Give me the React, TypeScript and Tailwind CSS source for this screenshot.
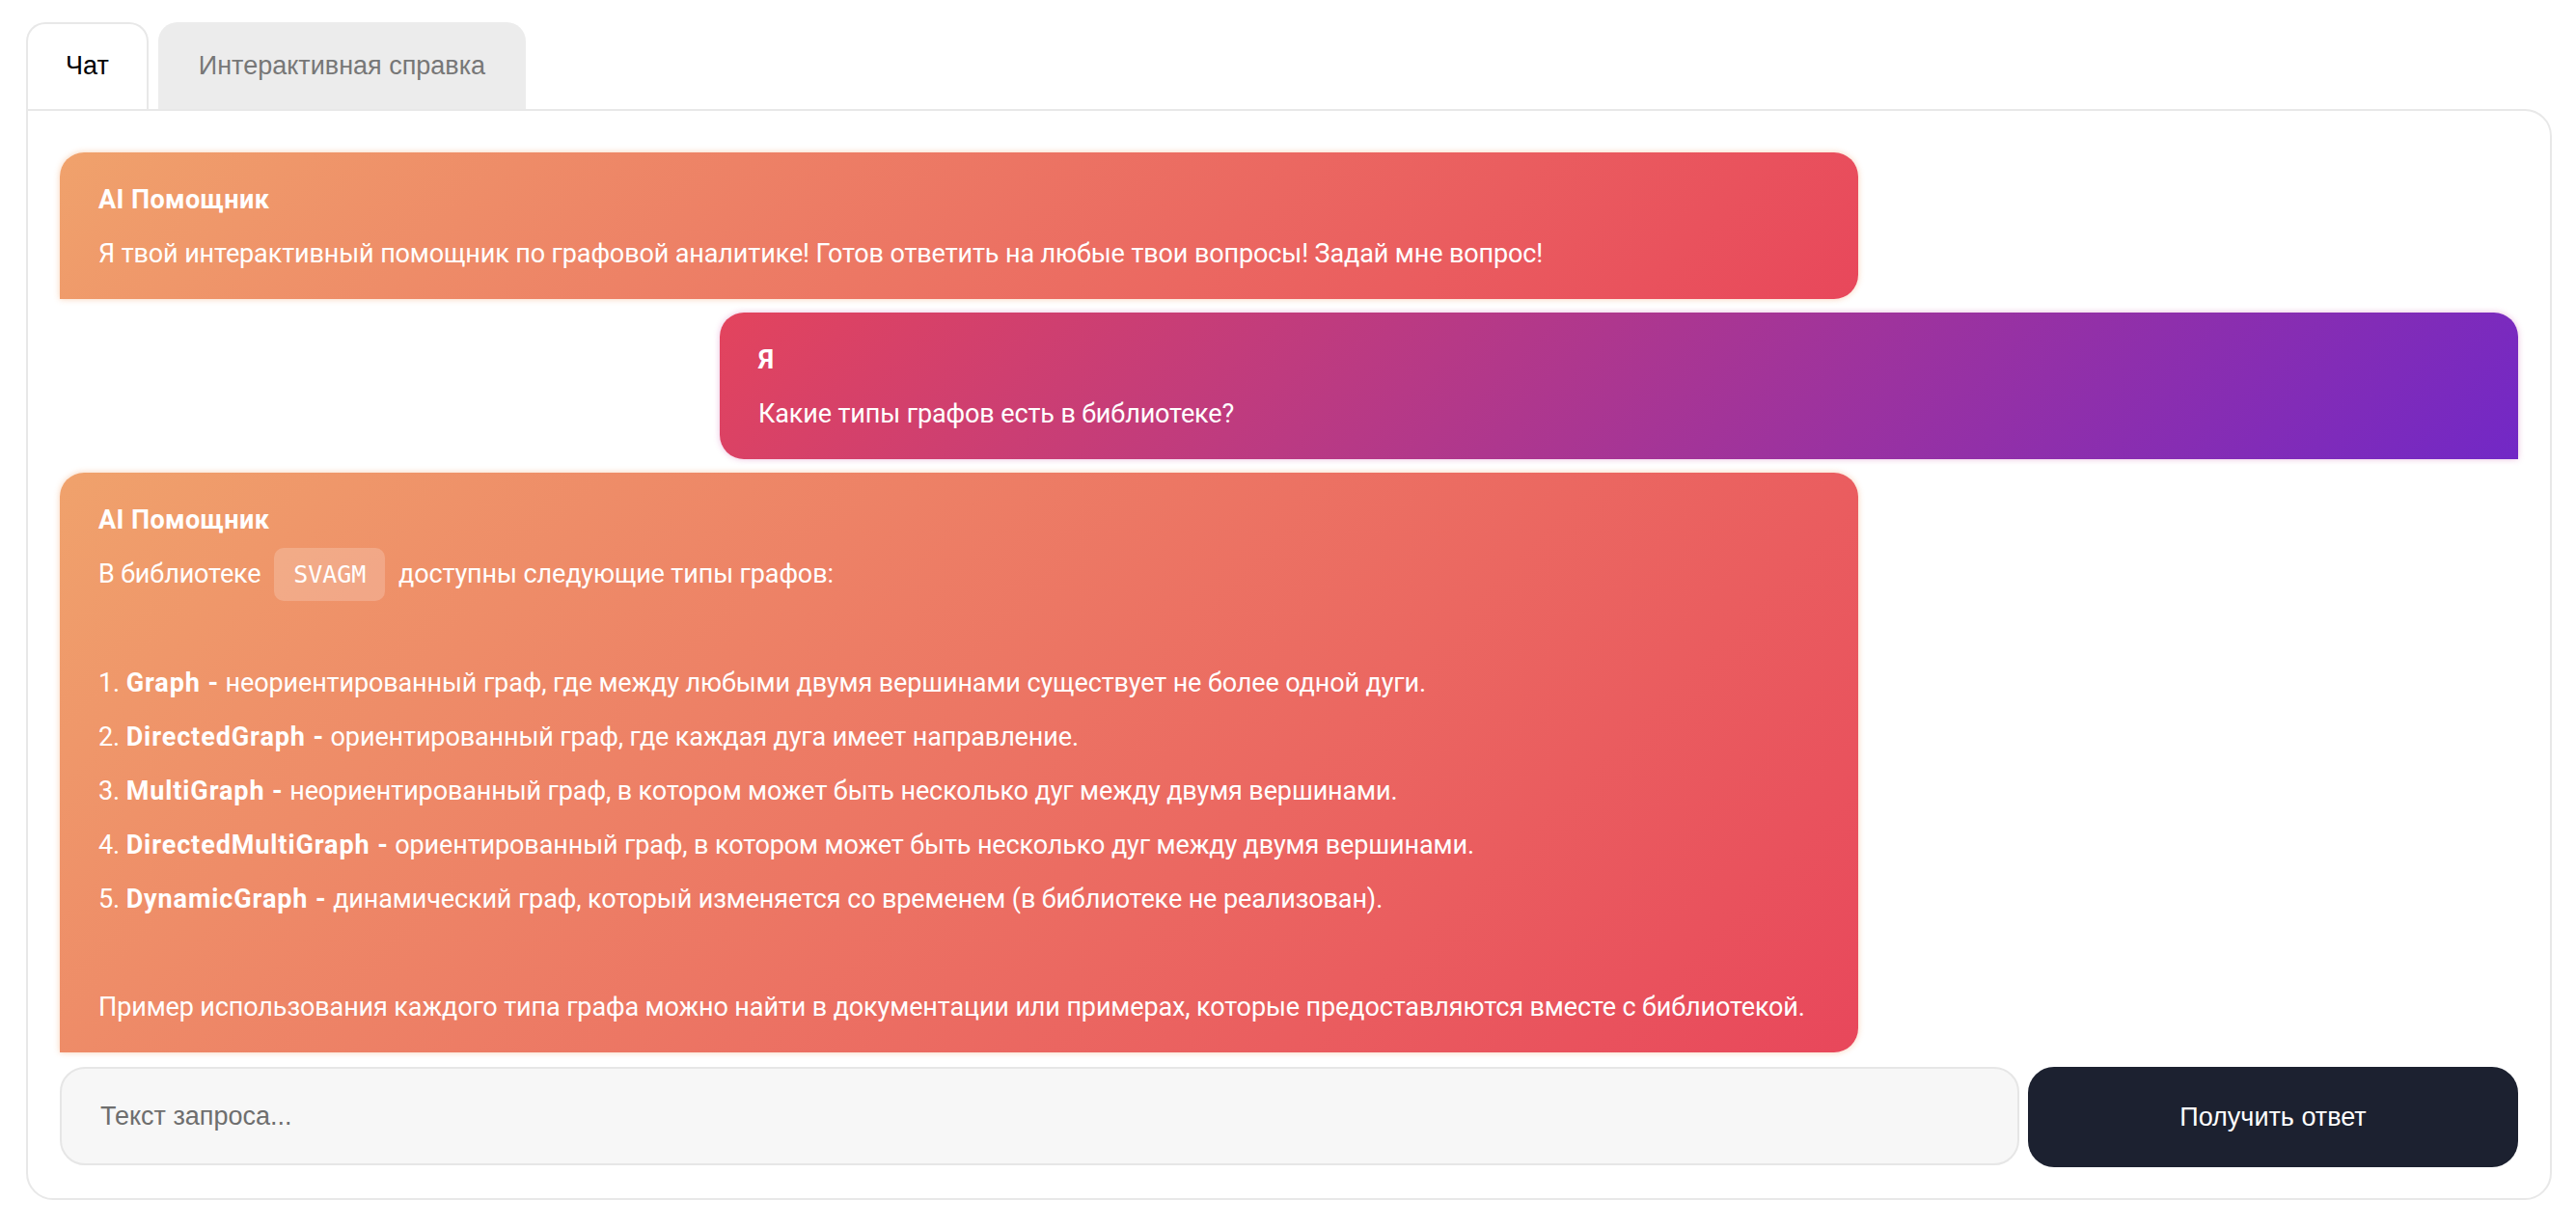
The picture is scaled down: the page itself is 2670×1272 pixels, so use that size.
import { useState } from "react";

const items = [
  { name: "Graph", text: "неориентированный граф, где между любыми двумя вершинами существует не более одной дуги." },
  { name: "DirectedGraph", text: "ориентированный граф, где каждая дуга имеет направление." },
  { name: "MultiGraph", text: "неориентированный граф, в котором может быть несколько дуг между двумя вершинами." },
  { name: "DirectedMultiGraph", text: "ориентированный граф, в котором может быть несколько дуг между двумя вершинами." },
  { name: "DynamicGraph", text: "динамический граф, который изменяется со временем (в библиотеке не реализован)." },
];

function Bubble({ author, mine, children }: { author: string; mine?: boolean; children: React.ReactNode }) {
  return (
    <div
      className={
        mine
          ? "self-end w-[1864px] rounded-[25px] rounded-br-none bg-[linear-gradient(135deg,#e3445d,#7228c6)] shadow-[0_0_6px_rgba(200,70,160,0.35)] px-[40px] pt-[29px] pb-[27px] text-white"
          : "self-start w-[1864px] rounded-[25px] rounded-bl-none bg-[linear-gradient(135deg,#f0a26c,#e8475b)] shadow-[0_0_6px_rgba(240,150,90,0.45)] px-[40px] pt-[29px] pb-[27px] text-white"
      }
    >
      <div className="font-bold text-[27px] leading-[40px] tracking-[0.4px] mb-[16px]">{author}</div>
      <div className="flex flex-col gap-[16px] text-[27px] leading-[40px] tracking-[-0.12px]">{children}</div>
    </div>
  );
}

export default function App() {
  const [tab, setTab] = useState(0);
  const [query, setQuery] = useState("");

  return (
    <div className="min-h-screen bg-white pl-[27px] pr-[25px] pt-[23px] font-['Liberation_Sans',Arial,sans-serif]">
      {/* вкладки */}
      <div className="flex gap-[10px]">
        <button
          onClick={() => setTab(0)}
          className="rounded-t-[20px] border-2 border-b-0 border-[#e8e8e8] bg-white px-[39px] pt-[23px] pb-[25px] text-[27px] leading-[40px] text-black"
        >
          Чат
        </button>
        <button
          onClick={() => setTab(1)}
          className="rounded-t-[20px] border-2 border-b-0 border-[#ececec] bg-[#ececec] px-[40px] pt-[23px] pb-[25px] text-[27px] leading-[40px] text-[#777777]"
        >
          Интерактивная справка
        </button>
      </div>

      <div className="rounded-[28px] rounded-tl-none border-2 border-[#e8e8e8] bg-white px-[33px] pt-[43px] pb-[32px]">
        <div className="flex flex-col gap-[14px] font-['Roboto',sans-serif]">
          <Bubble author="AI Помощник">
            <p>Я твой интерактивный помощник по графовой аналитике! Готов ответить на любые твои вопросы! Задай мне вопрос!</p>
          </Bubble>

          <Bubble author="Я" mine>
            <p>Какие типы графов есть в библиотеке?</p>
          </Bubble>

          <Bubble author="AI Помощник">
            <p>
              В библиотеке{" "}
              <code className="mx-[7px] rounded-[10px] bg-white/20 px-[20px] py-[13px] font-['DejaVu_Sans_Mono',monospace] text-[25px] tracking-normal">
                SVAGM
              </code>{" "}
              доступны следующие типы графов:
            </p>
            <p>&nbsp;</p>
            {items.map((it, i) => (
              <p key={it.name}>
                {i + 1}. <b className="tracking-[0.9px]">{it.name} -</b> {it.text}
              </p>
            ))}
            <p>&nbsp;</p>
            <p>Пример использования каждого типа графа можно найти в документации или примерах, которые предоставляются вместе с библиотекой.</p>
          </Bubble>
        </div>

        <div className="mt-[15px] flex gap-[9px]">
          <input
            value={query}
            onChange={(e) => setQuery(e.target.value)}
            placeholder="Текст запроса..."
            className="h-[102px] flex-1 rounded-[26px] border-2 border-[#e6e6e6] bg-[#f7f7f7] px-[40px] text-[27px] text-black outline-none placeholder:text-[#6e6e6e]"
          />
          <button className="h-[104px] w-[508px] rounded-[27px] bg-[#1c2130] text-[27px] text-white">
            Получить ответ
          </button>
        </div>
      </div>
      {tab === 1 && null}
    </div>
  );
}
